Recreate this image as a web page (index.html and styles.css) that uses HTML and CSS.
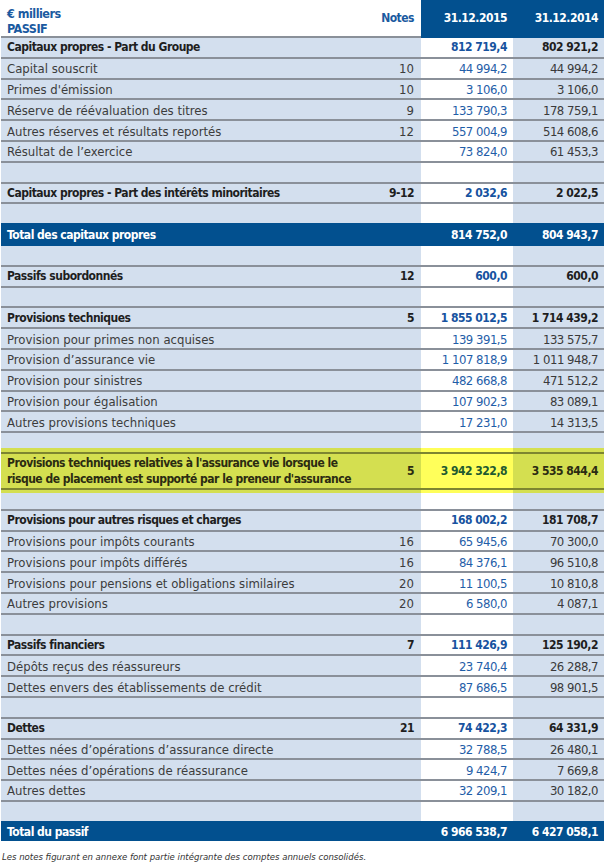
FILE: index.html
```html
<!DOCTYPE html>
<html lang="fr">
<head>
<meta charset="utf-8">
<title>Passif</title>
<link rel="stylesheet" href="styles.css">
</head>
<body>
<div class="sheet">
<table class="passif">
<colgroup><col class="c-label"><col class="c-note"><col class="c-y1"><col class="c-y2"></colgroup>
<thead>
<tr class="head"><th class="h-title">€ milliers<br>PASSIF</th><th class="h-notes">Notes</th><th class="h-date">31.12.2015</th><th class="h-date">31.12.2014</th></tr>
</thead>
<tbody>
<tr class="sub"><td>Capitaux propres - Part du Groupe</td><td></td><td>812 719,4</td><td>802 921,2</td></tr>
<tr><td>Capital souscrit</td><td>10</td><td>44 994,2</td><td>44 994,2</td></tr>
<tr><td>Primes d'émission</td><td>10</td><td>3 106,0</td><td>3 106,0</td></tr>
<tr><td>Réserve de réévaluation des titres</td><td>9</td><td>133 790,3</td><td>178 759,1</td></tr>
<tr><td>Autres réserves et résultats reportés</td><td>12</td><td>557 004,9</td><td>514 608,6</td></tr>
<tr><td>Résultat de l’exercice</td><td></td><td>73 824,0</td><td>61 453,3</td></tr>
<tr class="blank"><td></td><td></td><td></td><td></td></tr>
<tr class="sub"><td>Capitaux propres - Part des intérêts minoritaires</td><td>9-12</td><td>2 032,6</td><td>2 022,5</td></tr>
<tr class="blank"><td></td><td></td><td></td><td></td></tr>
<tr class="total"><td>Total des capitaux propres</td><td></td><td>814 752,0</td><td>804 943,7</td></tr>
<tr class="blank"><td></td><td></td><td></td><td></td></tr>
<tr class="sub"><td>Passifs subordonnés</td><td>12</td><td>600,0</td><td>600,0</td></tr>
<tr class="blank"><td></td><td></td><td></td><td></td></tr>
<tr class="sub"><td>Provisions techniques</td><td>5</td><td>1 855 012,5</td><td>1 714 439,2</td></tr>
<tr><td>Provision pour primes non acquises</td><td></td><td>139 391,5</td><td>133 575,7</td></tr>
<tr><td>Provision d’assurance vie</td><td></td><td>1 107 818,9</td><td>1 011 948,7</td></tr>
<tr><td>Provision pour sinistres</td><td></td><td>482 668,8</td><td>471 512,2</td></tr>
<tr><td>Provision pour égalisation</td><td></td><td>107 902,3</td><td>83 089,1</td></tr>
<tr><td>Autres provisions techniques</td><td></td><td>17 231,0</td><td>14 313,5</td></tr>
<tr class="blank pre-hl"><td></td><td></td><td></td><td></td></tr>
<tr class="hl"><td>Provisions techniques relatives à l'assurance vie lorsque le<br>risque de placement est supporté par le preneur d'assurance</td><td>5</td><td>3 942 322,8</td><td>3 535 844,4</td></tr>
<tr class="blank"><td></td><td></td><td></td><td></td></tr>
<tr class="sub"><td>Provisions pour autres risques et charges</td><td></td><td>168 002,2</td><td>181 708,7</td></tr>
<tr><td>Provisions pour impôts courants</td><td>16</td><td>65 945,6</td><td>70 300,0</td></tr>
<tr><td>Provisions pour impôts différés</td><td>16</td><td>84 376,1</td><td>96 510,8</td></tr>
<tr><td>Provisions pour pensions et obligations similaires</td><td>20</td><td>11 100,5</td><td>10 810,8</td></tr>
<tr><td>Autres provisions</td><td>20</td><td>6 580,0</td><td>4 087,1</td></tr>
<tr class="blank"><td></td><td></td><td></td><td></td></tr>
<tr class="sub"><td>Passifs financiers</td><td>7</td><td>111 426,9</td><td>125 190,2</td></tr>
<tr><td>Dépôts reçus des réassureurs</td><td></td><td>23 740,4</td><td>26 288,7</td></tr>
<tr><td>Dettes envers des établissements de crédit</td><td></td><td>87 686,5</td><td>98 901,5</td></tr>
<tr class="blank"><td></td><td></td><td></td><td></td></tr>
<tr class="sub"><td>Dettes</td><td>21</td><td>74 422,3</td><td>64 331,9</td></tr>
<tr><td>Dettes nées d’opérations d’assurance directe</td><td></td><td>32 788,5</td><td>26 480,1</td></tr>
<tr><td>Dettes nées d’opérations de réassurance</td><td></td><td>9 424,7</td><td>7 669,8</td></tr>
<tr><td>Autres dettes</td><td></td><td>32 209,1</td><td>30 182,0</td></tr>
<tr class="blank"><td></td><td></td><td></td><td></td></tr>
<tr class="total"><td>Total du passif</td><td></td><td>6 966 538,7</td><td>6 427 058,1</td></tr>
</tbody>
</table>
<p class="note">Les notes figurant en annexe font partie intégrante des comptes annuels consolidés.</p>
</div>
</body>
</html>
```

FILE: styles.css
```css
* { box-sizing: border-box; }

body {
  margin: 0;
  background: #ffffff;
  font-family: "DejaVu Sans Condensed", "Liberation Sans", sans-serif;
  font-size: 13px;
  color: #3c3c3c;
}

.sheet {
  padding: 0 6px 0 1px;
}

.passif {
  width: 603px;
  table-layout: fixed;
  border-collapse: separate;
  border-spacing: 0;
}

.passif .c-label { width: 369px; }
.passif .c-note { width: 51px; }
.passif .c-y1 { width: 92px; }
.passif .c-y2 { width: 91px; }

.passif th,
.passif td {
  padding: 0 6px;
  line-height: 15px;
  white-space: nowrap;
}

/* header */
.passif .head th {
  height: 36px;
  font-weight: bold;
  font-size: 12px;
  letter-spacing: -0.5px;
  background: #ffffff;
  color: #1a5aa0;
  vertical-align: middle;
  text-align: right;
}
.passif .head .h-title {
  font-size: 12.5px;
  text-align: left;
  vertical-align: bottom;
  padding-bottom: 0;
}
.passif .head .h-notes { padding-right: 7px; padding-top: 1px; }
.passif .head .h-date {
  background: #02508f;
  color: #ffffff;
  padding-top: 1px;
}

/* body rows */
.passif tbody tr { height: 20.8px; }

.passif td {
  border-top: 2px solid #8a9099;
  padding-top: 1px;
  background: #d3dfee;
  vertical-align: middle;
  text-align: right;
  color: #3c3c3c;
}
.passif td:nth-child(1) { text-align: left; }
.passif td:nth-child(2) { padding-right: 7px; }
.passif td:nth-child(3) { background: #ffffff; color: #1f5ea8; }
.passif td:nth-child(4) { color: #3a3a3a; }
.passif td:nth-child(n+3) { letter-spacing: -0.5px; }

.passif tbody tr:first-child td:nth-child(n+3) { border-top-color: #02508f; }

/* bold rows share a tighter setting */
.passif .sub td,
.passif .total td,
.passif .hl td {
  font-weight: bold;
  font-size: 12px;
  letter-spacing: -0.5px;
}

/* bold subtotal rows */
.passif .sub td { color: #1e1e1e; }
.passif .sub td:nth-child(3) { color: #1753a0; }

/* total rows */
.passif .total td,
.passif .total td:nth-child(3) {
  background: #02508f;
  border-top-color: #02508f;
  color: #ffffff;
}
.passif .total + tr td { border-top-color: #02508f; }

/* highlighted row */
.passif tr.hl { height: 36px; }
.passif .hl td {
  background: #d4df50;
  border-top-color: #7d8530;
  color: #2b2b12;
  line-height: 16.5px;
}
.passif .hl td:nth-child(3) { background: #ffff5a; color: #1e5a30; }

.passif .pre-hl td { background: linear-gradient(to top, #d4df50 4px, #d3dfee 4px); }
.passif .pre-hl td:nth-child(3) { background: linear-gradient(to top, #ffff5a 4px, #ffffff 4px); }
.passif .hl + tr td {
  border-top-color: #7d8530;
  background: linear-gradient(#d4df50 3px, #d3dfee 3px);
}
.passif .hl + tr td:nth-child(3) { background: linear-gradient(#ffff5a 3px, #ffffff 3px); }

/* footnote */
.note {
  margin: 9px 0 0 1px;
  font-style: italic;
  font-size: 9.5px;
  line-height: 13px;
  color: #333333;
}
```
